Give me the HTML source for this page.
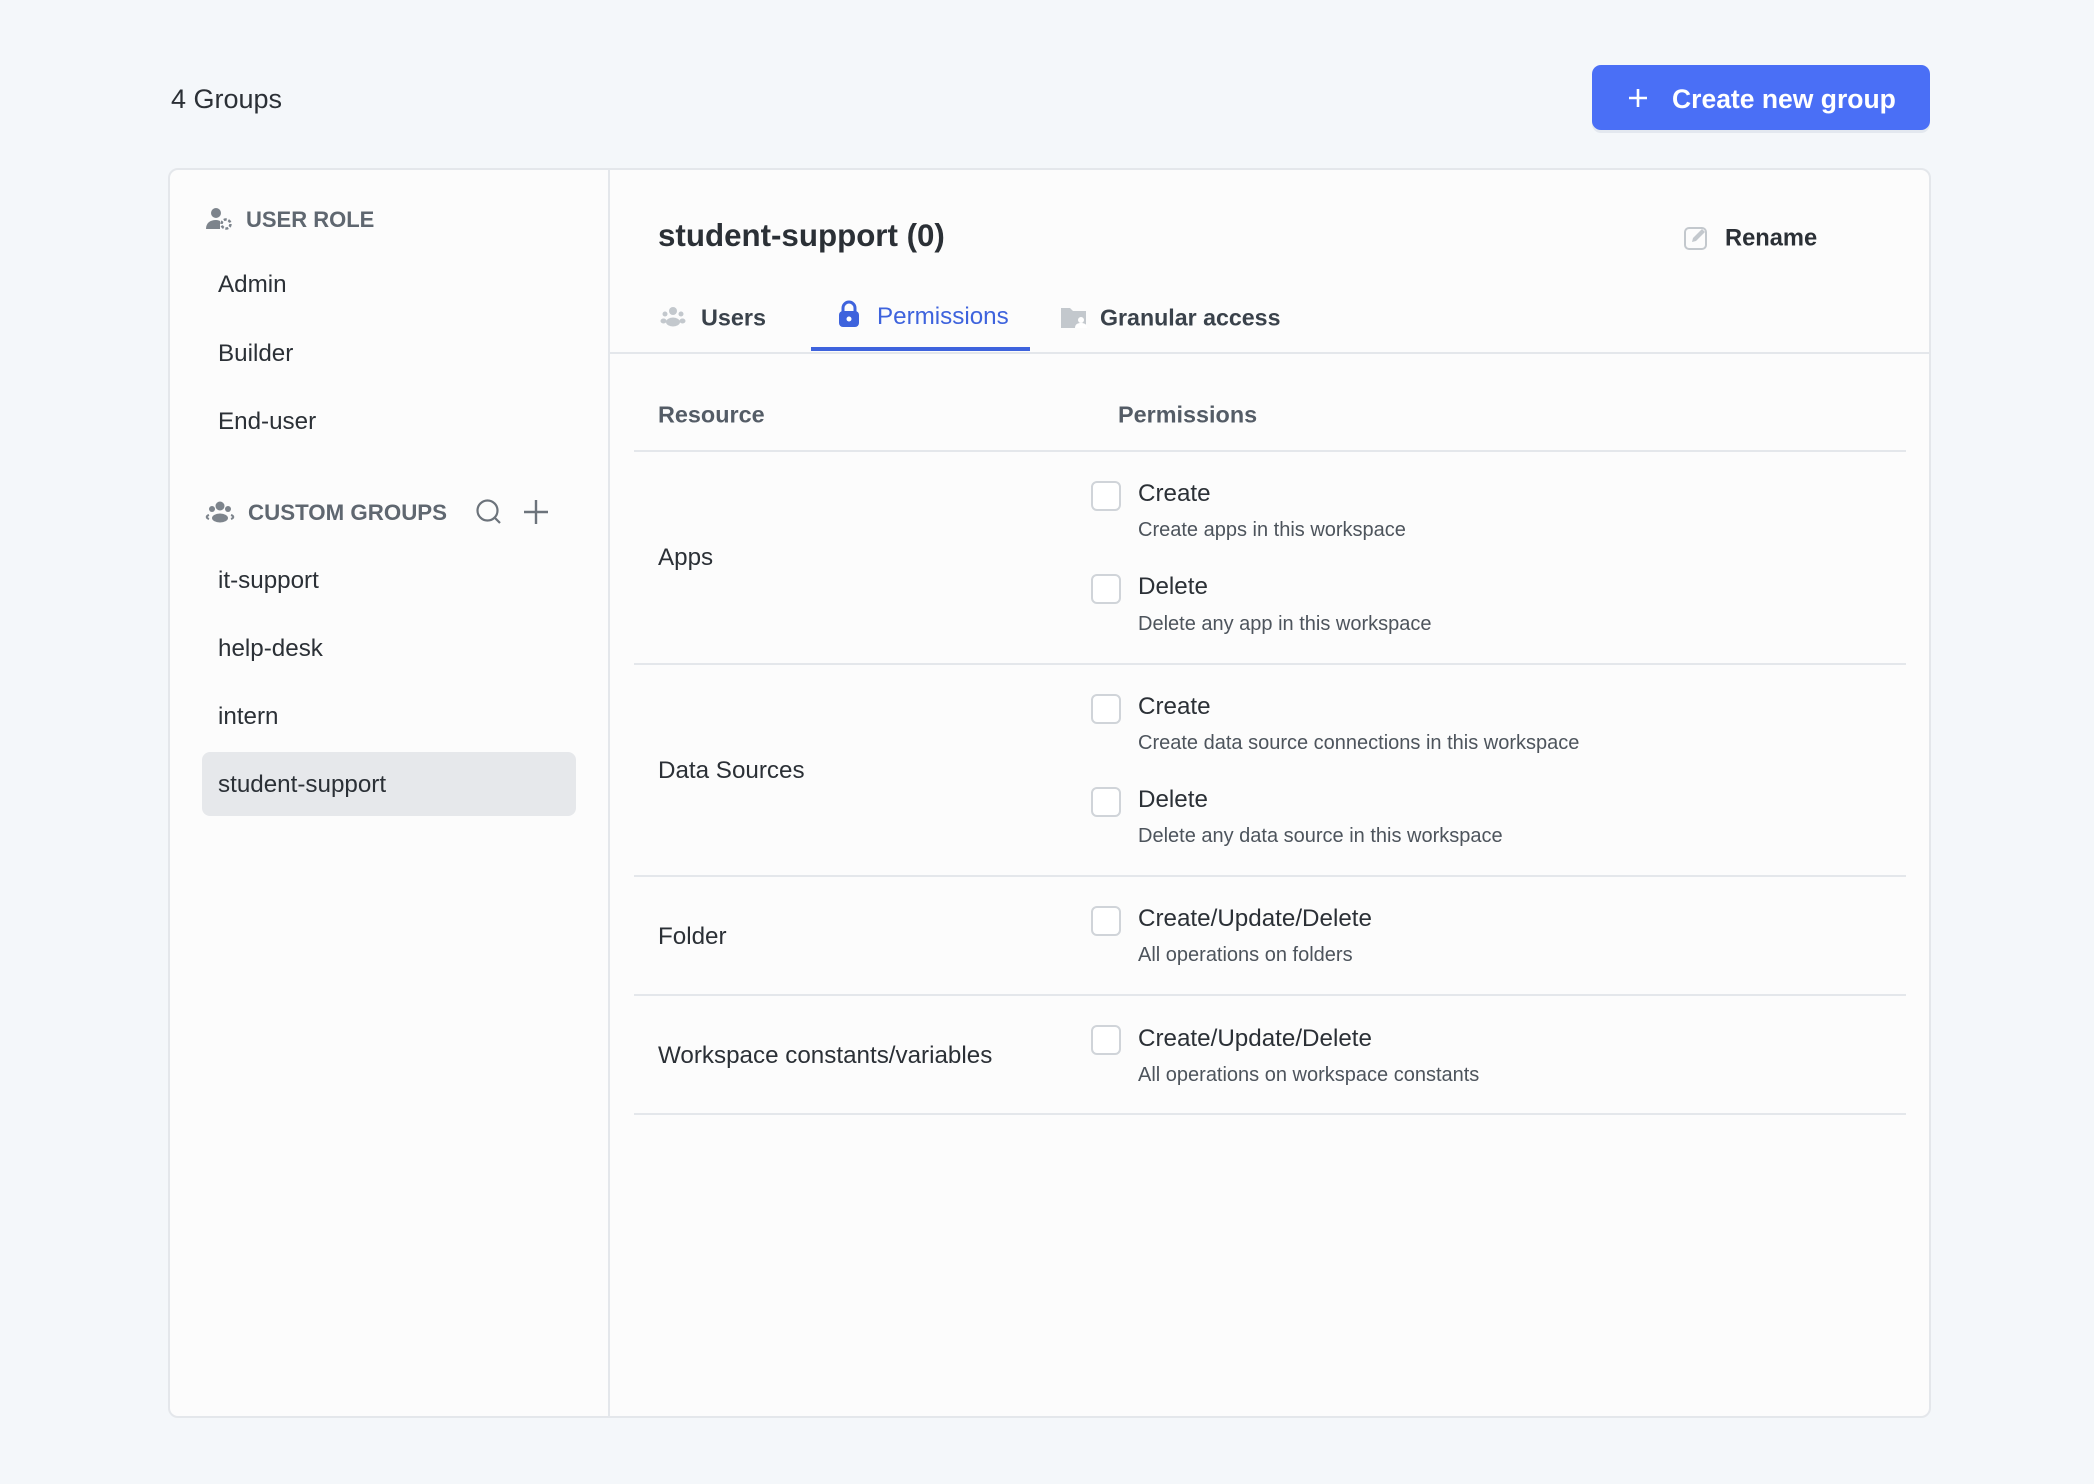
<!DOCTYPE html>
<html><head><meta charset="utf-8"><style>
*{box-sizing:border-box;margin:0;padding:0}
body{width:2094px;height:1484px;background:#f4f7fa;font-family:"Liberation Sans",sans-serif;color:#2b3036;position:relative;overflow:hidden}
.a{position:absolute;white-space:nowrap;line-height:1}
.c{transform:translateY(-45%)}
.t{font-size:24.2px}
.d{font-size:20px;color:#4d545c}
.cb{position:absolute;width:30px;height:30px;border:2px solid #d0d4d9;border-radius:6px;background:#fff}
.hl{position:absolute;left:634px;width:1272px;height:2px;background:#e4e7eb}
</style></head><body>
<div class="a c" style="left:171px;top:98px;font-size:27px;color:#2b3036">4 Groups</div>
<div class="a" style="left:1592px;top:65px;width:338px;height:65px;background:#4a6ff6;border-radius:9px;box-shadow:0 3px 0 #e3e8ef"></div>
<svg class="a" style="left:1627px;top:87px" width="22" height="22" viewBox="0 0 22 22"><path d="M11 2v18M2 11h18" stroke="#fff" stroke-width="2.6"/></svg>
<div class="a c" style="left:1672px;top:98px;font-size:26.5px;font-weight:bold;color:#fff">Create new group</div>

<div class="a" style="left:168px;top:168px;width:1763px;height:1250px;background:#fcfcfc;border:2px solid #e4e7eb;border-radius:10px"></div>
<div class="a" style="left:608px;top:170px;width:2px;height:1246px;background:#e4e7eb"></div>

<svg class="a" style="left:205px;top:207px" width="28" height="24" viewBox="0 0 28 24"><circle cx="11" cy="6" r="5" fill="#7d848c"/><path d="M1 22c0-6 4-9 10-9 2 0 3 .5 4 1v8z" fill="#7d848c"/><circle cx="21" cy="17" r="4.5" fill="none" stroke="#7d848c" stroke-width="2.5" stroke-dasharray="3 1.7"/></svg>
<div class="a c" style="left:246px;top:219px;font-size:22px;font-weight:bold;color:#5f6770">USER ROLE</div>
<div class="a c t" style="left:218px;top:284px">Admin</div>
<div class="a c t" style="left:218px;top:353px">Builder</div>
<div class="a c t" style="left:218px;top:421px">End-user</div>
<svg class="a" style="left:205px;top:501px" width="30" height="22" viewBox="0 0 30 22"><circle cx="15" cy="5" r="4.5" fill="#7d848c"/><circle cx="7" cy="8" r="3" fill="#7d848c"/><circle cx="23" cy="8" r="3" fill="#7d848c"/><ellipse cx="15" cy="17" rx="8" ry="4.5" fill="#7d848c"/><path d="M4 18c-3-1-3-3 0-4M26 18c3-1 3-3 0-4" stroke="#7d848c" stroke-width="2" fill="none"/></svg>
<div class="a c" style="left:248px;top:512px;font-size:22.3px;font-weight:bold;color:#5f6770">CUSTOM GROUPS</div>
<svg class="a" style="left:475px;top:498px" width="28" height="28" viewBox="0 0 28 28"><circle cx="12.5" cy="12.5" r="10" fill="none" stroke="#6c737b" stroke-width="2.2"/><path d="M20 20l5 5" stroke="#6c737b" stroke-width="2.2"/></svg>
<svg class="a" style="left:523px;top:499px" width="26" height="26" viewBox="0 0 26 26"><path d="M13 1v24M1 13h24" stroke="#6c737b" stroke-width="2.4"/></svg>
<div class="a c t" style="left:218px;top:580px">it-support</div>
<div class="a c t" style="left:218px;top:648px">help-desk</div>
<div class="a c t" style="left:218px;top:716px">intern</div>
<div class="a" style="left:202px;top:752px;width:374px;height:64px;background:#e6e8eb;border-radius:8px"></div>
<div class="a c t" style="left:218px;top:784px">student-support</div>

<div class="a c" style="left:658px;top:234px;font-size:31.3px;font-weight:bold;color:#2b3036">student-support (0)</div>
<svg class="a" style="left:1683px;top:225px" width="26" height="26" viewBox="0 0 26 26"><rect x="2" y="3" width="21" height="21" rx="4" fill="none" stroke="#c3c8cd" stroke-width="2"/><path d="M9 17l1-4 9-9 3 3-9 9z" fill="#c3c8cd"/></svg>
<div class="a c" style="left:1725px;top:238px;font-size:23.7px;font-weight:bold;color:#2b3036">Rename</div>

<svg class="a" style="left:660px;top:306px" width="26" height="22" viewBox="0 0 26 22"><circle cx="13" cy="5" r="4" fill="#c3c8cd"/><circle cx="5" cy="8" r="2.5" fill="#c3c8cd"/><circle cx="21" cy="8" r="2.5" fill="#c3c8cd"/><ellipse cx="13" cy="16" rx="7" ry="4.5" fill="#c3c8cd"/><ellipse cx="3.5" cy="15" rx="3" ry="2.5" fill="#c3c8cd"/><ellipse cx="22.5" cy="15" rx="3" ry="2.5" fill="#c3c8cd"/></svg>
<div class="a c" style="left:701px;top:317px;font-size:23.4px;font-weight:bold;color:#3a424b">Users</div>
<svg class="a" style="left:838px;top:300px" width="22" height="28" viewBox="0 0 22 28"><path d="M5 12V8a6 6 0 0112 0v4" fill="none" stroke="#3e63dd" stroke-width="3"/><rect x="1" y="11" width="20" height="16" rx="4" fill="#3e63dd"/><circle cx="11" cy="19" r="2.5" fill="#fff"/></svg>
<div class="a c t" style="left:877px;top:316px;color:#3e63dd">Permissions</div>
<div class="a" style="left:811px;top:347px;width:219px;height:4px;background:#3e63dd"></div>
<svg class="a" style="left:1060px;top:305px" width="28" height="24" viewBox="0 0 28 24"><path d="M1 3h9l3 3h13v17H1z" fill="#c3c8cd"/><circle cx="21" cy="15" r="3" fill="#fff"/><path d="M15 23c0-4 3-5 6-5s6 1 6 5z" fill="#fff"/></svg>
<div class="a c" style="left:1100px;top:317px;font-size:23.2px;font-weight:bold;color:#3a424b">Granular access</div>
<div class="a" style="left:610px;top:352px;width:1320px;height:2px;background:#e4e7eb"></div>

<div class="a c" style="left:658px;top:414px;font-size:23.4px;font-weight:bold;color:#545c66">Resource</div>
<div class="a c" style="left:1118px;top:414px;font-size:23.4px;font-weight:bold;color:#545c66">Permissions</div>
<div class="hl" style="top:450px"></div>

<div class="a c t" style="left:658px;top:557px">Apps</div>
<div class="cb" style="left:1091px;top:481px"></div>
<div class="a c t" style="left:1138px;top:493px">Create</div>
<div class="a c d" style="left:1138px;top:529px">Create apps in this workspace</div>
<div class="cb" style="left:1091px;top:574px"></div>
<div class="a c t" style="left:1138px;top:586px">Delete</div>
<div class="a c d" style="left:1138px;top:623px">Delete any app in this workspace</div>
<div class="hl" style="top:663px"></div>

<div class="a c t" style="left:658px;top:770px">Data Sources</div>
<div class="cb" style="left:1091px;top:694px"></div>
<div class="a c t" style="left:1138px;top:706px">Create</div>
<div class="a c d" style="left:1138px;top:742px">Create data source connections in this workspace</div>
<div class="cb" style="left:1091px;top:787px"></div>
<div class="a c t" style="left:1138px;top:799px">Delete</div>
<div class="a c d" style="left:1138px;top:835px">Delete any data source in this workspace</div>
<div class="hl" style="top:875px"></div>

<div class="a c t" style="left:658px;top:936px">Folder</div>
<div class="cb" style="left:1091px;top:906px"></div>
<div class="a c t" style="left:1138px;top:918px">Create/Update/Delete</div>
<div class="a c d" style="left:1138px;top:954px">All operations on folders</div>
<div class="hl" style="top:994px"></div>

<div class="a c t" style="left:658px;top:1055px">Workspace constants/variables</div>
<div class="cb" style="left:1091px;top:1025px"></div>
<div class="a c t" style="left:1138px;top:1038px">Create/Update/Delete</div>
<div class="a c d" style="left:1138px;top:1074px">All operations on workspace constants</div>
<div class="hl" style="top:1113px"></div>
</body></html>
